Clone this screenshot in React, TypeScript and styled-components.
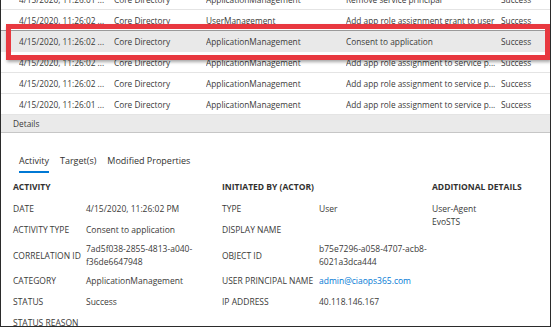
import React from "react";
import styled, { createGlobalStyle } from "styled-components";

const Global = createGlobalStyle`
  html, body { margin: 0; padding: 0; background: #ffffff; }
  body { font-family: "Open Sans", "Noto Sans", "Liberation Sans", sans-serif; color: #3b3a39; }
`;

const Frame = styled.div`
  position: relative;
  box-sizing: border-box;
  width: 551px;
  height: 327px;
  border: 1px solid #2b2b2b;
  border-top: none;
  overflow: hidden;
  background: #fff;
  font-size: 8.5px;
`;

const Table = styled.div`
  margin-top: -11px;
  display: flex;
  flex-direction: column;
  font-size: 8.3px;
`;

const Row = styled.div<{ $selected?: boolean }>`
  box-sizing: border-box;
  height: 21px;
  display: grid;
  grid-template-columns: 95px 92px 140px 155px 1fr;
  align-items: center;
  padding-left: 18px;
  border-bottom: 1px solid ${(p) => (p.$selected ? "transparent" : "#e4e4e4")};
  background: ${(p) => (p.$selected ? "#e9e9e9" : "#fff")};
  box-shadow: ${(p) => (p.$selected ? "0 0 0 1px #9a9a9a" : "none")};
  white-space: nowrap;
`;

const Cell = styled.span`
  overflow: hidden;
  white-space: nowrap;
  color: #3b3a39;
`;

const Highlight = styled.div`
  position: absolute;
  left: 5px;
  top: 24px;
  width: 544px;
  height: 36px;
  box-sizing: border-box;
  border: 5px solid #e8383f;
  box-shadow: 1px 2px 3px rgba(0, 0, 0, 0.35);
  pointer-events: none;
`;

const DetailsBar = styled.div`
  height: 17px;
  line-height: 17px;
  padding-left: 12px;
  background: #eaeaea;
  border-bottom: 1px solid #c6c6c6;
  font-size: 8.3px;
`;

const Tabs = styled.div`
  display: flex;
  gap: 11px;
  padding: 21px 0 0 18px;
  font-size: 9px;
`;

const Tab = styled.div<{ $active?: boolean }>`
  line-height: 13px;
  padding-bottom: 4px;
  border-bottom: 2px solid ${(p) => (p.$active ? "#0078d4" : "transparent")};
  color: #323130;
`;

const Grid = styled.div`
  display: grid;
  grid-template-columns: 209px 210px 1fr;
  padding-left: 12px;
  margin-top: 7px;
`;

const Column = styled.div`
  display: flex;
  flex-direction: column;
`;

const Heading = styled.div`
  font-weight: 700;
  line-height: 13px;
  margin-bottom: 5px;
  text-transform: uppercase;
  color: #323130;
`;

const Field = styled.div<{ $labelWidth: number; $double?: boolean }>`
  display: grid;
  grid-template-columns: ${(p) => p.$labelWidth}px 1fr;
  align-items: center;
  line-height: 13px;
  padding: ${(p) => (p.$double ? "2px 0" : "4px 0")};
`;

const Label = styled.span`
  text-transform: uppercase;
  white-space: nowrap;
`;

const Value = styled.span`
  white-space: nowrap;
`;

const Link = styled.span`
  color: #0078d4;
`;

const Stack = styled.div`
  padding-top: 4px;
  line-height: 13px;
`;

const rows = [
  ["4/15/2020, 11:26:01 ...", "Core Directory", "ApplicationManagement", "Remove service principal", "Success"],
  ["4/15/2020, 11:26:02 ...", "Core Directory", "UserManagement", "Add app role assignment grant to user", "Success"],
  ["4/15/2020, 11:26:02 ...", "Core Directory", "ApplicationManagement", "Consent to application", "Success"],
  ["4/15/2020, 11:26:02 ...", "Core Directory", "ApplicationManagement", "Add app role assignment to service p...", "Success"],
  ["4/15/2020, 11:26:02 ...", "Core Directory", "ApplicationManagement", "Add app role assignment to service p...", "Success"],
  ["4/15/2020, 11:26:01 ...", "Core Directory", "ApplicationManagement", "Add app role assignment to service p...", "Success"],
];

export default function App() {
  return (
    <>
      <Global />
      <Frame>
        <Table>
          {rows.map((r, i) => (
            <Row key={i} $selected={i === 2}>
              {r.map((c, j) => (
                <Cell key={j}>{c}</Cell>
              ))}
            </Row>
          ))}
        </Table>
        <Highlight />
        <DetailsBar>Details</DetailsBar>
        <Tabs>
          <Tab $active>Activity</Tab>
          <Tab>Target(s)</Tab>
          <Tab>Modified Properties</Tab>
        </Tabs>
        <Grid>
          <Column>
            <Heading>Activity</Heading>
            <Field $labelWidth={73}>
              <Label>Date</Label>
              <Value>4/15/2020, 11:26:02 PM</Value>
            </Field>
            <Field $labelWidth={73}>
              <Label>Activity Type</Label>
              <Value>Consent to application</Value>
            </Field>
            <Field $labelWidth={73} $double>
              <Label>Correlation ID</Label>
              <Value>
                7ad5f038-2855-4813-a040-
                <br />
                f36de6647948
              </Value>
            </Field>
            <Field $labelWidth={73}>
              <Label>Category</Label>
              <Value>ApplicationManagement</Value>
            </Field>
            <Field $labelWidth={73}>
              <Label>Status</Label>
              <Value>Success</Value>
            </Field>
            <Field $labelWidth={73}>
              <Label>Status Reason</Label>
              <Value></Value>
            </Field>
          </Column>
          <Column>
            <Heading>Initiated by (actor)</Heading>
            <Field $labelWidth={97}>
              <Label>Type</Label>
              <Value>User</Value>
            </Field>
            <Field $labelWidth={97}>
              <Label>Display Name</Label>
              <Value></Value>
            </Field>
            <Field $labelWidth={97} $double>
              <Label>Object ID</Label>
              <Value>
                b75e7296-a058-4707-acb8-
                <br />
                6021a3dca444
              </Value>
            </Field>
            <Field $labelWidth={97}>
              <Label>User Principal Name</Label>
              <Link>admin@ciaops365.com</Link>
            </Field>
            <Field $labelWidth={97}>
              <Label>IP Address</Label>
              <Value>40.118.146.167</Value>
            </Field>
          </Column>
          <Column>
            <Heading>Additional Details</Heading>
            <Stack>
              <div>User-Agent</div>
              <div>EvoSTS</div>
            </Stack>
          </Column>
        </Grid>
      </Frame>
    </>
  );
}
